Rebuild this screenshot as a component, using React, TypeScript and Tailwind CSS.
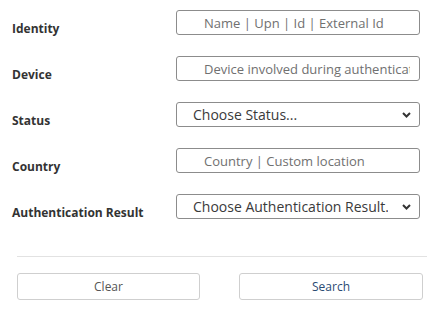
import React from "react";

const font = { fontFamily: '"Open Sans", "Noto Sans", sans-serif' };

function Chevron() {
  return (
    <svg
      className="pointer-events-none absolute right-[9px] top-1/2 -translate-y-1/2"
      width="9"
      height="6"
      viewBox="0 0 9 6"
    >
      <path d="M1 1 L4.5 4.5 L8 1" fill="none" stroke="#333" strokeWidth="2" />
    </svg>
  );
}

function TextRow({ label, placeholder }: { label: string; placeholder: string }) {
  return (
    <div className="flex h-[46px] items-start">
      <label className="w-[164px] pt-[10px] text-[12px] font-bold text-[#333]">{label}</label>
      <input
        placeholder={placeholder}
        className="h-[25px] w-[244px] rounded-[3px] border border-[#8c8c8c] bg-white pl-[27px] pr-[9px] text-[13px] text-[#333] outline-none placeholder:text-[#707070]"
        style={font}
      />
    </div>
  );
}

function SelectRow({ label, placeholder }: { label: string; placeholder: string }) {
  return (
    <div className="flex h-[46px] items-start">
      <label className="w-[164px] pt-[10px] text-[12px] font-bold text-[#333]">{label}</label>
      <div className="relative h-[25px] w-[244px]">
        <select
          className="h-full w-full appearance-none rounded-[3px] border border-[#8c8c8c] bg-white pl-[16px] pr-[31px] text-[14px] text-[#3a3a3a] outline-none"
          style={font}
          defaultValue=""
        >
          <option value="">{placeholder}</option>
        </select>
        <Chevron />
      </div>
    </div>
  );
}

export default function App() {
  return (
    <div className="h-[318px] w-[435px] bg-white" style={font}>
      <div className="pl-[12px] pt-[10px]">
        <TextRow label="Identity" placeholder="Name | Upn | Id | External Id" />
        <TextRow label="Device" placeholder="Device involved during authentication" />
        <SelectRow label="Status" placeholder="Choose Status..." />
        <TextRow label="Country" placeholder="Country | Custom location" />
        <SelectRow label="Authentication Result" placeholder="Choose Authentication Result..." />
      </div>
      <div className="ml-[17px] mt-[16px] w-[410px] border-t border-[#e2e2e2]" />
      <div className="ml-[17px] mt-[16px] flex w-[406px] justify-between">
        <button className="h-[27px] w-[183px] rounded-[3px] border border-[#cfcfcf] bg-white text-[12px] text-[#555]">
          Clear
        </button>
        <button className="h-[27px] w-[184px] rounded-[3px] border border-[#cfcfcf] bg-white text-[12px] text-[#2b4a73]">
          Search
        </button>
      </div>
    </div>
  );
}
